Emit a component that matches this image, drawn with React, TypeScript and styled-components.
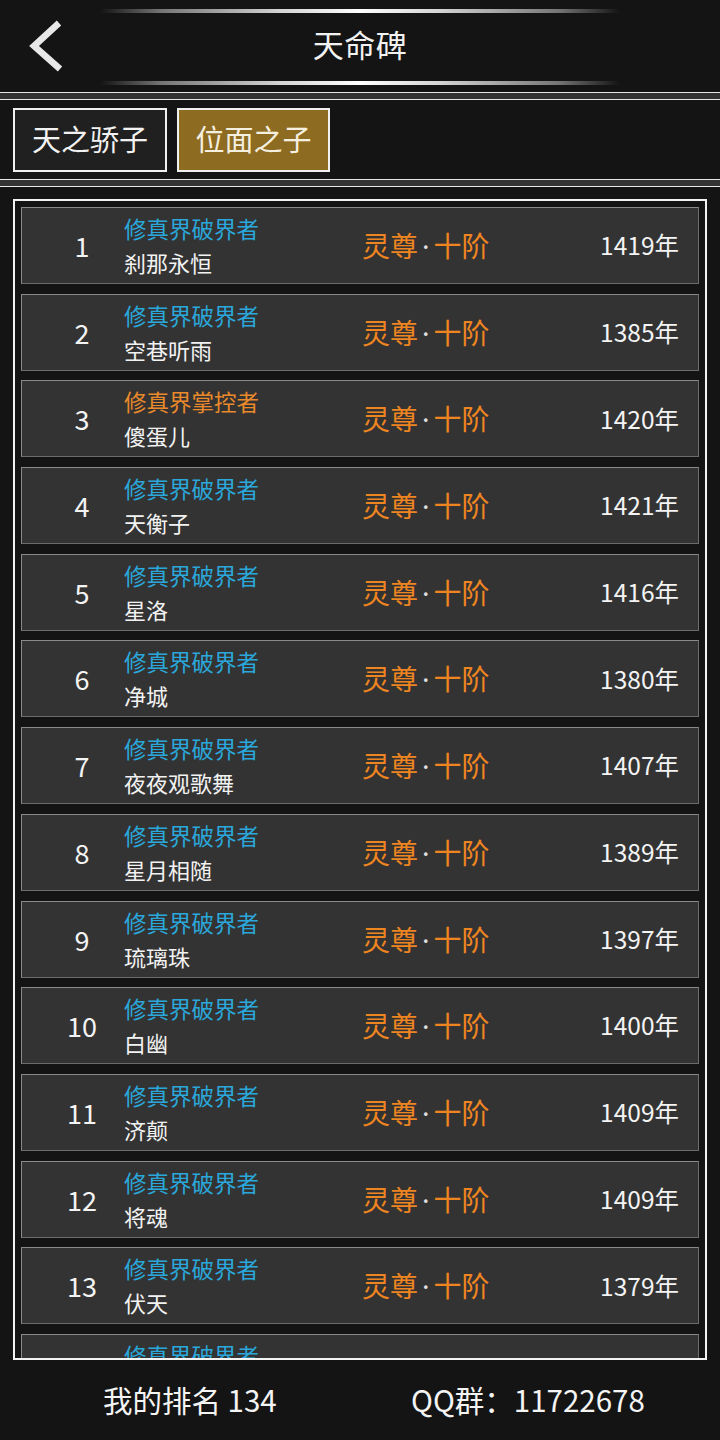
import React from "react";
import styled, { createGlobalStyle } from "styled-components";

const Global = createGlobalStyle`
  html, body { margin: 0; padding: 0; background: #141414; }
  body { font-family: "Noto Sans CJK SC", "Noto Sans", sans-serif; color: #fff; }
  * { box-sizing: border-box; }
`;

const Page = styled.div`
  width: 720px;
  height: 1440px;
  display: flex;
  flex-direction: column;
  background: #141414;
  overflow: hidden;
`;

const Header = styled.header`
  position: relative;
  height: 92px;
  display: flex;
  align-items: center;
  justify-content: center;
`;

const Glow = styled.div<{ $top: number }>`
  position: absolute;
  left: 100px;
  width: 520px;
  top: ${(p) => p.$top}px;
  height: 4px;
  border-radius: 2px;
  background: linear-gradient(
    90deg,
    rgba(255, 255, 255, 0) 0%,
    rgba(200, 200, 200, 0.55) 12%,
    rgba(235, 235, 235, 0.9) 35%,
    #ffffff 50%,
    rgba(235, 235, 235, 0.9) 65%,
    rgba(200, 200, 200, 0.55) 88%,
    rgba(255, 255, 255, 0) 100%
  );
  filter: blur(0.6px);
`;

const BackButton = styled.button`
  position: absolute;
  left: 26px;
  top: 18px;
  width: 42px;
  height: 58px;
  padding: 0;
  border: none;
  background: transparent;
  cursor: pointer;
`;

const Title = styled.h1`
  margin: -6px 0 0;
  font-size: 31px;
  font-weight: 400;
  color: #f2f2f2;
  letter-spacing: 0.5px;
  line-height: 1;
`;

const Divider = styled.div`
  height: 8px;
  border-top: 1px solid #e8e8e8;
  border-bottom: 1px solid #e8e8e8;
  background: #333;
`;

const TabBar = styled.nav`
  height: 79px;
  display: flex;
  align-items: flex-start;
  gap: 10px;
  padding: 8px 13px 0;
`;

const Tab = styled.button<{ $active?: boolean; $w: number }>`
  width: ${(p) => p.$w}px;
  height: 64px;
  border: 2px solid #f0f0f0;
  background: ${(p) => (p.$active ? "#8d6b20" : "#202020")};
  color: ${(p) => (p.$active ? "#f5efe0" : "#f2f2f2")};
  font-family: "Noto Sans CJK SC", sans-serif;
  font-size: 29px;
  line-height: 1;
  padding: 0 0 3px;
  display: flex;
  align-items: center;
  justify-content: center;
`;

const ListWrap = styled.div`
  flex: 1;
  min-height: 0;
  padding: 12px 13px 0;
  display: flex;
`;

const ListBox = styled.div`
  flex: 1;
  border: 2px solid #f2f2f2;
  padding: 6px 6px 0;
  overflow: hidden;
  display: flex;
  flex-direction: column;
  gap: 9.7px;
`;

const Row = styled.div`
  flex: 0 0 77px;
  height: 77px;
  display: grid;
  grid-template-columns: 102px 238px 1fr auto;
  align-items: center;
  padding-right: 19px;
  background: #333333;
  border: 1px solid #6c6c6c;
  border-top-color: #8a8a8a;
  border-left-color: #8a8a8a;
`;

const Num = styled.div`
  padding-left: 18px;
  text-align: center;
  font-size: 27px;
  color: #f4f4f4;
  line-height: 1;
`;

const Info = styled.div`
  display: flex;
  flex-direction: column;
  gap: 4px;
  margin-top: -1px;
`;

const Rank = styled.div<{ $orange?: boolean }>`
  font-size: 22.5px;
  line-height: 30px;
  color: ${(p) => (p.$orange ? "#ea8a2a" : "#2aa8dc")};
`;

const Name = styled.div`
  font-size: 22px;
  line-height: 30px;
  color: #f2f2f2;
`;

const Realm = styled.div`
  font-size: 28px;
  line-height: 1;
  color: #ee8520;
  white-space: nowrap;
`;

const Dot = styled.span`
  font-family: "Noto Sans", sans-serif;
  color: #e0e0e0;
  margin: 0 4px;
`;

const Years = styled.div`
  font-size: 24.5px;
  line-height: 1;
  color: #f4f4f4;
  text-align: right;
`;

const Footer = styled.footer`
  height: 80px;
  display: flex;
  align-items: center;
  padding-left: 103px;
  font-size: 29.5px;
  color: #f4f4f4;
`;

const FooterItem = styled.span<{ $w?: number }>`
  width: ${(p) => (p.$w ? `${p.$w}px` : "auto")};
  line-height: 1;
  white-space: nowrap;
`;

type Entry = { title: string; orange?: boolean; name: string; years: number };

const entries: Entry[] = [
  { title: "修真界破界者", name: "刹那永恒", years: 1419 },
  { title: "修真界破界者", name: "空巷听雨", years: 1385 },
  { title: "修真界掌控者", orange: true, name: "傻蛋儿", years: 1420 },
  { title: "修真界破界者", name: "天衡子", years: 1421 },
  { title: "修真界破界者", name: "星洛", years: 1416 },
  { title: "修真界破界者", name: "净城", years: 1380 },
  { title: "修真界破界者", name: "夜夜观歌舞", years: 1407 },
  { title: "修真界破界者", name: "星月相随", years: 1389 },
  { title: "修真界破界者", name: "琉璃珠", years: 1397 },
  { title: "修真界破界者", name: "白幽", years: 1400 },
  { title: "修真界破界者", name: "济颠", years: 1409 },
  { title: "修真界破界者", name: "将魂", years: 1409 },
  { title: "修真界破界者", name: "伏天", years: 1379 },
  { title: "修真界破界者", name: "问道", years: 1402 },
];

export default function App() {
  return (
    <>
      <Global />
      <Page>
        <Header>
          <Glow $top={9} />
          <BackButton aria-label="返回">
            <svg width="42" height="58" viewBox="0 0 42 58">
              <polyline
                points="33,5 8,28 34,51"
                fill="none"
                stroke="#e8e8e8"
                strokeWidth="6.5"
                strokeLinejoin="miter"
              />
            </svg>
          </BackButton>
          <Title>天命碑</Title>
          <Glow $top={81} />
        </Header>
        <Divider />
        <TabBar>
          <Tab $w={154}>天之骄子</Tab>
          <Tab $w={153} $active>
            位面之子
          </Tab>
        </TabBar>
        <Divider />
        <ListWrap>
          <ListBox>
            {entries.map((e, i) => (
              <Row key={i}>
                <Num>{i + 1}</Num>
                <Info>
                  <Rank $orange={e.orange}>{e.title}</Rank>
                  <Name>{e.name}</Name>
                </Info>
                <Realm>
                  灵尊<Dot>·</Dot>十阶
                </Realm>
                <Years>{e.years}年</Years>
              </Row>
            ))}
          </ListBox>
        </ListWrap>
        <Footer>
          <FooterItem $w={308}>我的排名 134</FooterItem>
          <FooterItem>QQ群：11722678</FooterItem>
        </Footer>
      </Page>
    </>
  );
}
